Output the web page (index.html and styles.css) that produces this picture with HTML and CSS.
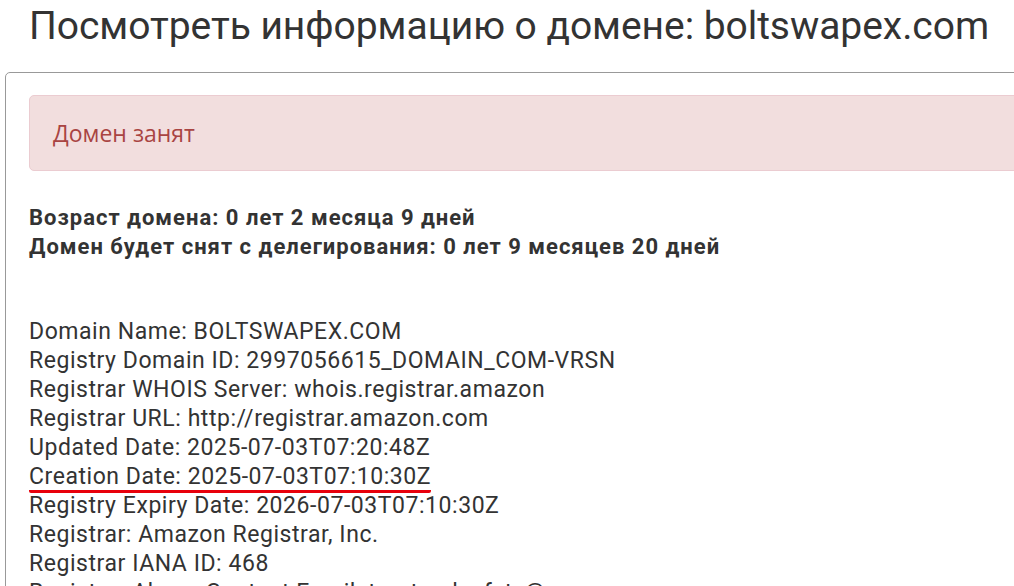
FILE: index.html
```html
<!DOCTYPE html>
<html lang="ru">
<head>
  <meta charset="UTF-8">
  <title>Посмотреть информацию о домене: boltswapex.com</title>
  <link rel="stylesheet" href="styles.css">
</head>
<body>
  <!-- заголовок -->
  <h1 class="page-title">Посмотреть информацию о домене: boltswapex.com</h1>

  <!-- карточка с результатом -->
  <div class="card">
    <div class="alert alert-danger">Домен занят</div>

    <p class="age">
      Возраст домена: 0 лет 2 месяца 9 дней<br>
      Домен будет снят с делегирования: 0 лет 9 месяцев 20 дней
    </p>

    <div class="whois">
      Domain Name: BOLTSWAPEX.COM<br>
      Registry Domain ID: 2997056615_DOMAIN_COM-VRSN<br>
      Registrar WHOIS Server: whois.registrar.amazon<br>
      Registrar URL: http://registrar.amazon.com<br>
      Updated Date: 2025-07-03T07:20:48Z<br>
      <span class="mark">Creation Date: 2025-07-03T07:10:30Z</span><br>
      Registry Expiry Date: 2026-07-03T07:10:30Z<br>
      Registrar: Amazon Registrar, Inc.<br>
      Registrar IANA ID: 468<br>
      Registrar Abuse Contact Email: trustandsafety@amazon.com
    </div>
  </div>
</body>
</html>
```

FILE: styles.css
```css
* {
  margin: 0;
  padding: 0;
  box-sizing: border-box;
}

body {
  font-family: Roboto, "Liberation Sans", sans-serif;
  color: #333;
  background: #fff;
  overflow: hidden;
  width: 1014px;
  height: 586px;
}

/* заголовок страницы */
.page-title {
  font-weight: 400;
  font-size: 39px;
  letter-spacing: -0.05px;
  line-height: 50px;
  padding: 1px 0 0 29px;
  height: 72px;
  white-space: nowrap;
}

/* карточка */
.card {
  margin-left: 5px;
  width: 1200px;
  border: 1px solid #999;
  border-radius: 5px;
  padding: 22px 23px;
}

.alert {
  font-family: "Open Sans", "Noto Sans", sans-serif;
  font-size: 23px;
  line-height: 28px;
  padding: 23px 23px;
  border-radius: 5px;
}

.alert-danger {
  background-color: #f2dede;
  border: 1px solid #ebccd1;
  color: #a94442;
}

.age {
  margin-top: 32px;
  font-weight: 700;
  font-size: 22px;
  letter-spacing: 1px;
  line-height: 29px;
}

/* whois-данные */
.whois {
  margin-top: 56px;
  font-size: 23px;
  letter-spacing: 0.55px;
  line-height: 29px;
  white-space: nowrap;
}

.mark {
  display: inline-block;
  border-bottom: 3px solid #e8000b;
  border-radius: 2px;
  line-height: 26px;
  margin-bottom: -3px;
}
```
